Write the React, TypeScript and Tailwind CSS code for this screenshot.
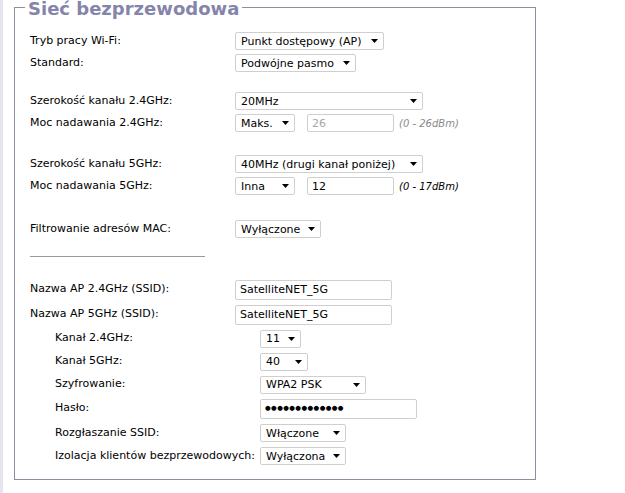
import React from "react";

const Arrow = () => (
  <svg width="7" height="4" viewBox="0 0 7 4" className="shrink-0">
    <path d="M0 0 L7 0 L3.5 4 Z" fill="#000" />
  </svg>
);

const Select = ({ w, children }: { w: string; children: React.ReactNode }) => (
  <div
    className={`${w} h-[18px] flex items-center justify-between border border-[#cfcfcf] rounded-[2px] bg-white pl-[5px] pr-[5px] text-[11px] text-black leading-none whitespace-nowrap`}
  >
    <span>{children}</span>
    <Arrow />
  </div>
);

const Input = ({ w, h, children, muted }: { w: string; h: string; children: React.ReactNode; muted?: boolean }) => (
  <div
    className={`${w} ${h} flex items-center border border-[#cfcfcf] rounded-[2px] bg-white pl-[4px] text-[11px] leading-none whitespace-nowrap ${muted ? "text-[#a8a8a8]" : "text-black"}`}
  >
    {children}
  </div>
);

const Row = ({ label, h, sub, children }: { label: string; h: string; sub?: boolean; children: React.ReactNode }) => (
  <div className={`flex items-center ${h}`}>
    <div className={sub ? "w-[230px] pl-[25px] shrink-0 whitespace-nowrap" : "w-[205px] shrink-0 whitespace-nowrap"}>{label}</div>
    <div className="flex items-center">{children}</div>
  </div>
);

export default function App() {
  return (
    <div
      className="flex min-h-[493px] bg-white text-[11px] text-black"
      style={{ fontFamily: '"DejaVu Sans", Verdana, sans-serif' }}
    >
      <div className="w-[3px] shrink-0 bg-[#e7e4ef]" />
      <div className="pl-[11px]">
        <fieldset className="-mt-px w-[522px] border border-[#8e8c9f] px-[15px] pb-[12px]">
          <legend className="-ml-[5px] px-[3px] pt-[4px] text-[18px] leading-[12px] font-bold text-[#8585a9]">
            Sieć bezprzewodowa
          </legend>
          <div className="h-[15px]" />
          <Row label="Tryb pracy Wi-Fi:" h="h-[22px]">
            <Select w="w-[149px]">Punkt dostępowy (AP)</Select>
          </Row>
          <Row label="Standard:" h="h-[22px]">
            <Select w="w-[121px]">Podwójne pasmo</Select>
          </Row>
          <div className="h-[16px]" />
          <Row label="Szerokość kanału 2.4GHz:" h="h-[22px]">
            <Select w="w-[188px]">20MHz</Select>
          </Row>
          <Row label="Moc nadawania 2.4GHz:" h="h-[22px]">
            <Select w="w-[60px]">Maks.</Select>
            <div className="w-[12px]" />
            <Input w="w-[87px]" h="h-[18px]" muted>
              26
            </Input>
            <span className="ml-[5px] text-[10px] italic text-[#8a8a8a]">(0 - 26dBm)</span>
          </Row>
          <div className="h-[19px]" />
          <Row label="Szerokość kanału 5GHz:" h="h-[22px]">
            <Select w="w-[188px]">40MHz (drugi kanał poniżej)</Select>
          </Row>
          <Row label="Moc nadawania 5GHz:" h="h-[22px]">
            <Select w="w-[60px]">Inna</Select>
            <div className="w-[12px]" />
            <Input w="w-[87px]" h="h-[18px]">12</Input>
            <span className="ml-[5px] text-[10px] italic text-black">(0 - 17dBm)</span>
          </Row>
          <div className="h-[21px]" />
          <Row label="Filtrowanie adresów MAC:" h="h-[22px]">
            <Select w="w-[86px]">Wyłączone</Select>
          </Row>
          <div className="h-[16px]" />
          <div className="w-[175px] h-px bg-[#9a9a9a]" />
          <div className="h-[20px]" />
          <Row label="Nazwa AP 2.4GHz (SSID):" h="h-[25px]">
            <Input w="w-[157px]" h="h-[20px]">SatelliteNET_5G</Input>
          </Row>
          <Row label="Nazwa AP 5GHz (SSID):" h="h-[25px]">
            <Input w="w-[157px]" h="h-[20px]">SatelliteNET_5G</Input>
          </Row>
          <Row label="Kanał 2.4GHz:" h="h-[23px]" sub>
            <Select w="w-[41px]">11</Select>
          </Row>
          <Row label="Kanał 5GHz:" h="h-[23px]" sub>
            <Select w="w-[48px]">40</Select>
          </Row>
          <Row label="Szyfrowanie:" h="h-[23px]" sub>
            <Select w="w-[106px]">WPA2 PSK</Select>
          </Row>
          <Row label="Hasło:" h="h-[25px]" sub>
            <Input w="w-[157px]" h="h-[20px]">
              <span className="text-[6.5px] tracking-[0.4px]">●●●●●●●●●●●●●</span>
            </Input>
          </Row>
          <Row label="Rozgłaszanie SSID:" h="h-[24px]" sub>
            <Select w="w-[86px]">Włączone</Select>
          </Row>
          <Row label="Izolacja klientów bezprzewodowych:" h="h-[22px]" sub>
            <Select w="w-[86px]">Wyłączona</Select>
          </Row>
        </fieldset>
      </div>
    </div>
  );
}
